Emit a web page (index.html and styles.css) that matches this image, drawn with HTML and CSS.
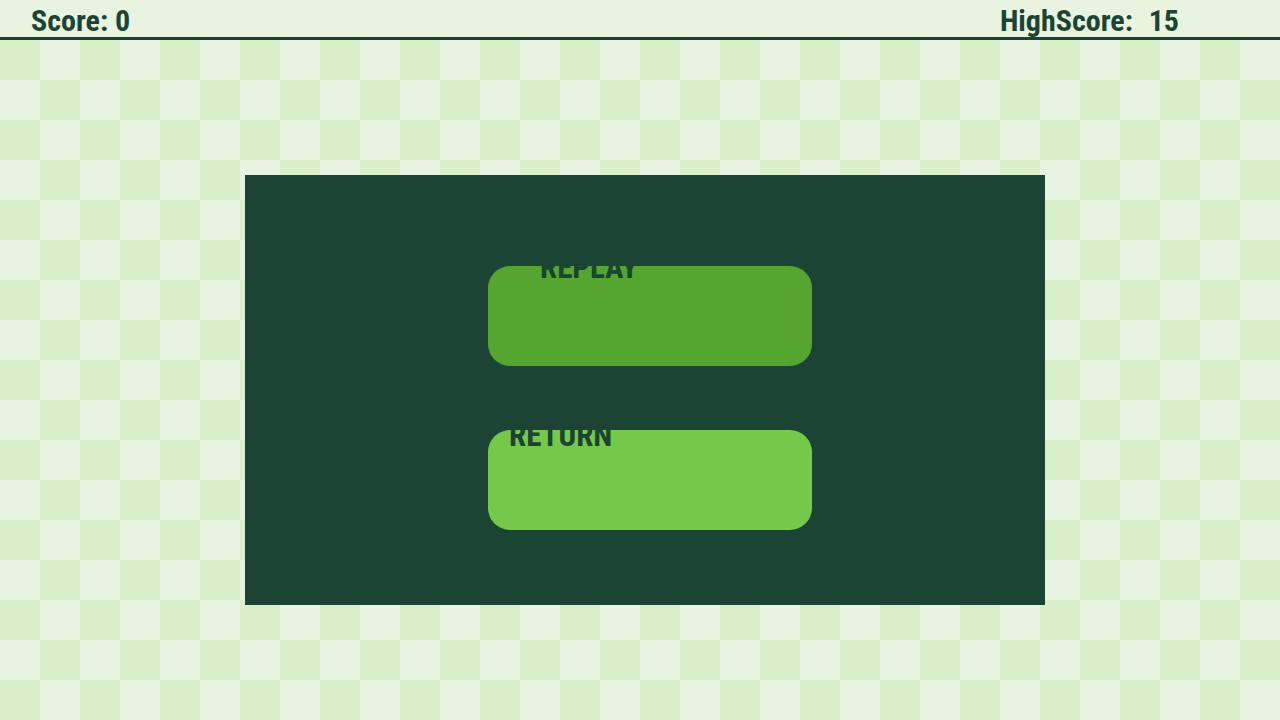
FILE: index.html
```html
<!DOCTYPE html>
<html>
<head>
<meta charset="utf-8">
<link rel="stylesheet" href="styles.css">
</head>
<body>
<header class="topbar">
  <div class="score">Score: 0</div>
  <div class="high">HighScore:&nbsp; <span class="high-num">15</span></div>
</header>
<main class="board">
  <section class="panel">
    <div class="btn btn-replay"><span class="label label-replay">REPLAY</span></div>
    <div class="btn btn-return"><span class="label label-return">RETURN</span></div>
  </section>
</main>
</body>
</html>
```
FILE: styles.css
```css
* { box-sizing: border-box; }
html, body { margin: 0; padding: 0; }
body {
  width: 1280px;
  height: 720px;
  overflow: hidden;
  font-family: "Roboto Condensed", "Liberation Sans Narrow", "Roboto", sans-serif;
  font-stretch: condensed;
  font-weight: 700;
  color: #1c4434;
  background: #e8f4df;
}
.topbar {
  height: 40px;
  display: flex;
  justify-content: space-between;
  align-items: flex-start;
  padding: 4px 100px 0 31px;
  background: #e8f4df;
  border-bottom: 3px solid #1c4434;
  font-size: 30px;
  line-height: 33px;
}
.high { margin-right: 1px; }
.high-num { padding-left: 2px; }
.board {
  height: 680px;
  background-color: #e8f4df;
  background-image:
    conic-gradient(transparent 0 25%, #d9efc9 0 50%, transparent 0 75%, #d9efc9 0);
  background-size: 80px 80px;
  background-position: 0 0;
  padding-top: 135px;
  padding-left: 245px;
}
.panel {
  width: 800px;
  height: 430px;
  background: #1c4434;
  padding: 91px 0 0 243px;
  display: flex;
  flex-direction: column;
  gap: 64px;
}
.btn {
  width: 324px;
  height: 100px;
  border-radius: 22px;
  overflow: visible;
}
.btn-replay { background: #55a630; }
.btn-return { background: #74c948; }
.label {
  display: block;
  font-size: 31px;
  line-height: 30px;
  margin-top: -13px;
}
.label-replay { padding-left: 52px; }
.label-return { padding-left: 21px; margin-top: -9px; }
```
